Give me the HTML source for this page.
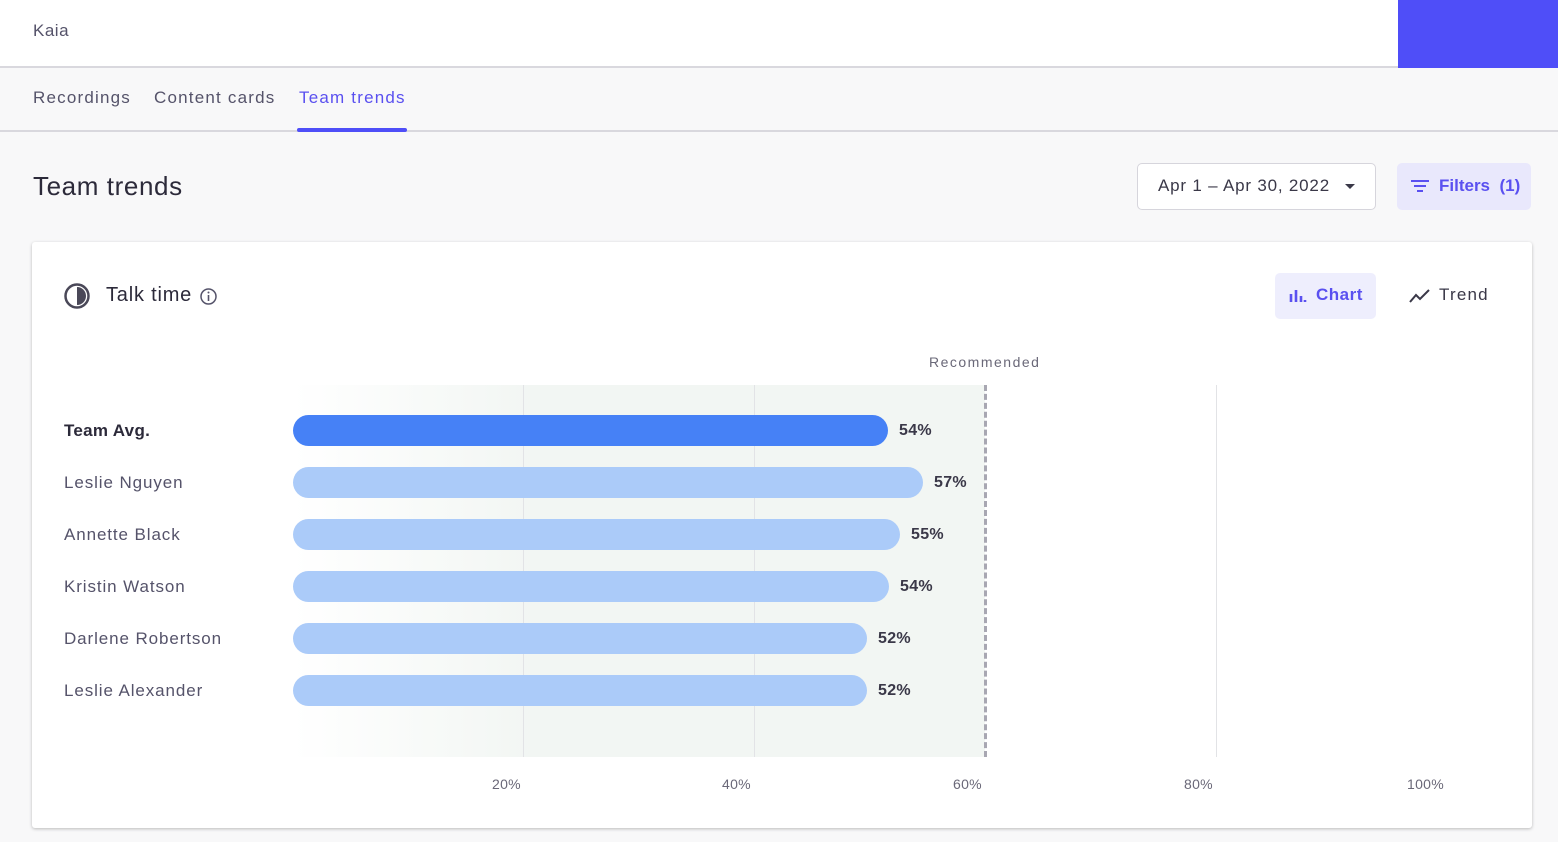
<!DOCTYPE html>
<html><head><style>
*{margin:0;padding:0;box-sizing:border-box}
body{width:1558px;height:842px;background:#f8f8f9;font-family:"Liberation Sans",sans-serif;position:relative;overflow:hidden;color:#2c2a3a}
.a{position:absolute;white-space:nowrap}
.bar{position:absolute;left:293px;height:31px;border-radius:16px;background:#abcbf9}
.name{position:absolute;left:64px;font-size:17px;color:#55536a;letter-spacing:0.9px}
.pct{position:absolute;font-size:16px;font-weight:bold;color:#3a3848;letter-spacing:0.3px}
.ax{position:absolute;top:776px;font-size:14px;color:#6a6878;letter-spacing:0.3px}
</style></head><body>
<div class="a" style="left:0;top:0;width:1558px;height:68px;background:#fff;border-bottom:2px solid #d9d8de"></div>
<div class="a" style="left:1398px;top:0;width:160px;height:68px;background:#4f4ef8"></div>
<div class="a" style="left:33px;top:21px;font-size:17px;color:#55536a;letter-spacing:0.5px">Kaia</div>
<div class="a" style="left:0;top:130px;width:1558px;height:2px;background:#d9d8de"></div>
<div class="a" style="left:33px;top:88px;font-size:17px;color:#55536a;letter-spacing:1.2px">Recordings</div>
<div class="a" style="left:154px;top:88px;font-size:17px;color:#55536a;letter-spacing:1.2px">Content cards</div>
<div class="a" style="left:299px;top:88px;font-size:17px;color:#5a50f0;letter-spacing:1.2px">Team trends</div>
<div class="a" style="left:297px;top:128px;width:110px;height:4px;background:#4f4ef8;border-radius:2px"></div>
<div class="a" style="left:33px;top:171px;font-size:26px;color:#2c2a3a;letter-spacing:0.6px">Team trends</div>
<div class="a" style="left:1137px;top:163px;width:239px;height:47px;background:#fff;border:1px solid #d6d5dc;border-radius:5px"></div>
<div class="a" style="left:1158px;top:176px;font-size:17px;color:#3a3848;letter-spacing:0.8px">Apr 1 – Apr 30, 2022</div>
<div class="a" style="left:1345px;top:184px;width:0;height:0;border-left:5px solid transparent;border-right:5px solid transparent;border-top:5px solid #3a3848"></div>
<div class="a" style="left:1397px;top:163px;width:134px;height:47px;background:#e9e8fc;border-radius:5px"></div>
<svg class="a" style="left:1410px;top:178px" width="20" height="16"><path d="M1 3h18M4 8h12M7 13h6" stroke="#5a50f0" stroke-width="2"/></svg>
<div class="a" style="left:1439px;top:176px;font-size:17px;font-weight:bold;color:#5a50f0">Filters&nbsp; (1)</div>
<div class="a" style="left:32px;top:242px;width:1500px;height:586px;background:#fff;border-radius:3px;box-shadow:0 1px 3px rgba(0,0,0,.25)"></div>
<svg class="a" style="left:63px;top:282px" width="28" height="28"><circle cx="14" cy="14" r="11.5" fill="none" stroke="#4a4858" stroke-width="2.5"/><path d="M14 5a9 9 0 0 1 0 18z" fill="#4a4858"/></svg>
<div class="a" style="left:106px;top:284px;font-size:20px;color:#2c2a3a;letter-spacing:0.8px">Talk time</div>
<svg class="a" style="left:199px;top:287px" width="19" height="19"><circle cx="9.5" cy="9.5" r="7.5" fill="none" stroke="#55536a" stroke-width="1.5"/><path d="M9.5 8v6" stroke="#55536a" stroke-width="1.6"/><circle cx="9.5" cy="5.5" r="1" fill="#55536a"/></svg>
<div class="a" style="left:1275px;top:273px;width:101px;height:46px;background:#eeeefd;border-radius:5px"></div>
<svg class="a" style="left:1289px;top:287px" width="18" height="16"><path d="M2 7v8M7 3v12M12 9v6M16 13v2" stroke="#5a50f0" stroke-width="2.6"/></svg>
<div class="a" style="left:1316px;top:285px;font-size:17px;font-weight:bold;color:#5a50f0;letter-spacing:0.5px">Chart</div>
<svg class="a" style="left:1409px;top:287px" width="22" height="16"><path d="M1 15l6-7 4 4 9-9" fill="none" stroke="#3a3848" stroke-width="2"/></svg>
<div class="a" style="left:1439px;top:285px;font-size:17px;color:#3a3848;letter-spacing:1.2px">Trend</div>
<div class="a" style="left:929px;top:354px;font-size:14px;color:#6a6878;letter-spacing:1.5px">Recommended</div>
<div class="a" style="left:293px;top:385px;width:692px;height:372px;background:linear-gradient(90deg,#fff,#f2f6f3 35%,#f2f6f3)"></div>
<div class="a" style="left:523px;top:385px;width:1px;height:372px;background:#e2e3e6"></div>
<div class="a" style="left:754px;top:385px;width:1px;height:372px;background:#e2e3e6"></div>
<div class="a" style="left:1216px;top:385px;width:1px;height:372px;background:#e2e3e6"></div>
<div class="a" style="left:984px;top:385px;width:0;height:372px;border-left:3px dashed #a8a7b2"></div>
<div class="bar" style="top:415px;width:595px;background:#4681f6"></div>
<div class="bar" style="top:467px;width:630px"></div>
<div class="bar" style="top:519px;width:607px"></div>
<div class="bar" style="top:571px;width:596px"></div>
<div class="bar" style="top:623px;width:574px"></div>
<div class="bar" style="top:675px;width:574px"></div>
<div class="name" style="top:421px;font-weight:bold;color:#2c2a3a;letter-spacing:0.3px">Team Avg.</div>
<div class="name" style="top:473px">Leslie Nguyen</div>
<div class="name" style="top:525px">Annette Black</div>
<div class="name" style="top:577px">Kristin Watson</div>
<div class="name" style="top:629px">Darlene Robertson</div>
<div class="name" style="top:681px">Leslie Alexander</div>
<div class="pct" style="left:899px;top:422px">54%</div>
<div class="pct" style="left:934px;top:474px">57%</div>
<div class="pct" style="left:911px;top:526px">55%</div>
<div class="pct" style="left:900px;top:578px">54%</div>
<div class="pct" style="left:878px;top:630px">52%</div>
<div class="pct" style="left:878px;top:682px">52%</div>
<div class="ax" style="left:492px">20%</div>
<div class="ax" style="left:722px">40%</div>
<div class="ax" style="left:953px">60%</div>
<div class="ax" style="left:1184px">80%</div>
<div class="ax" style="left:1407px">100%</div>
</body></html>
